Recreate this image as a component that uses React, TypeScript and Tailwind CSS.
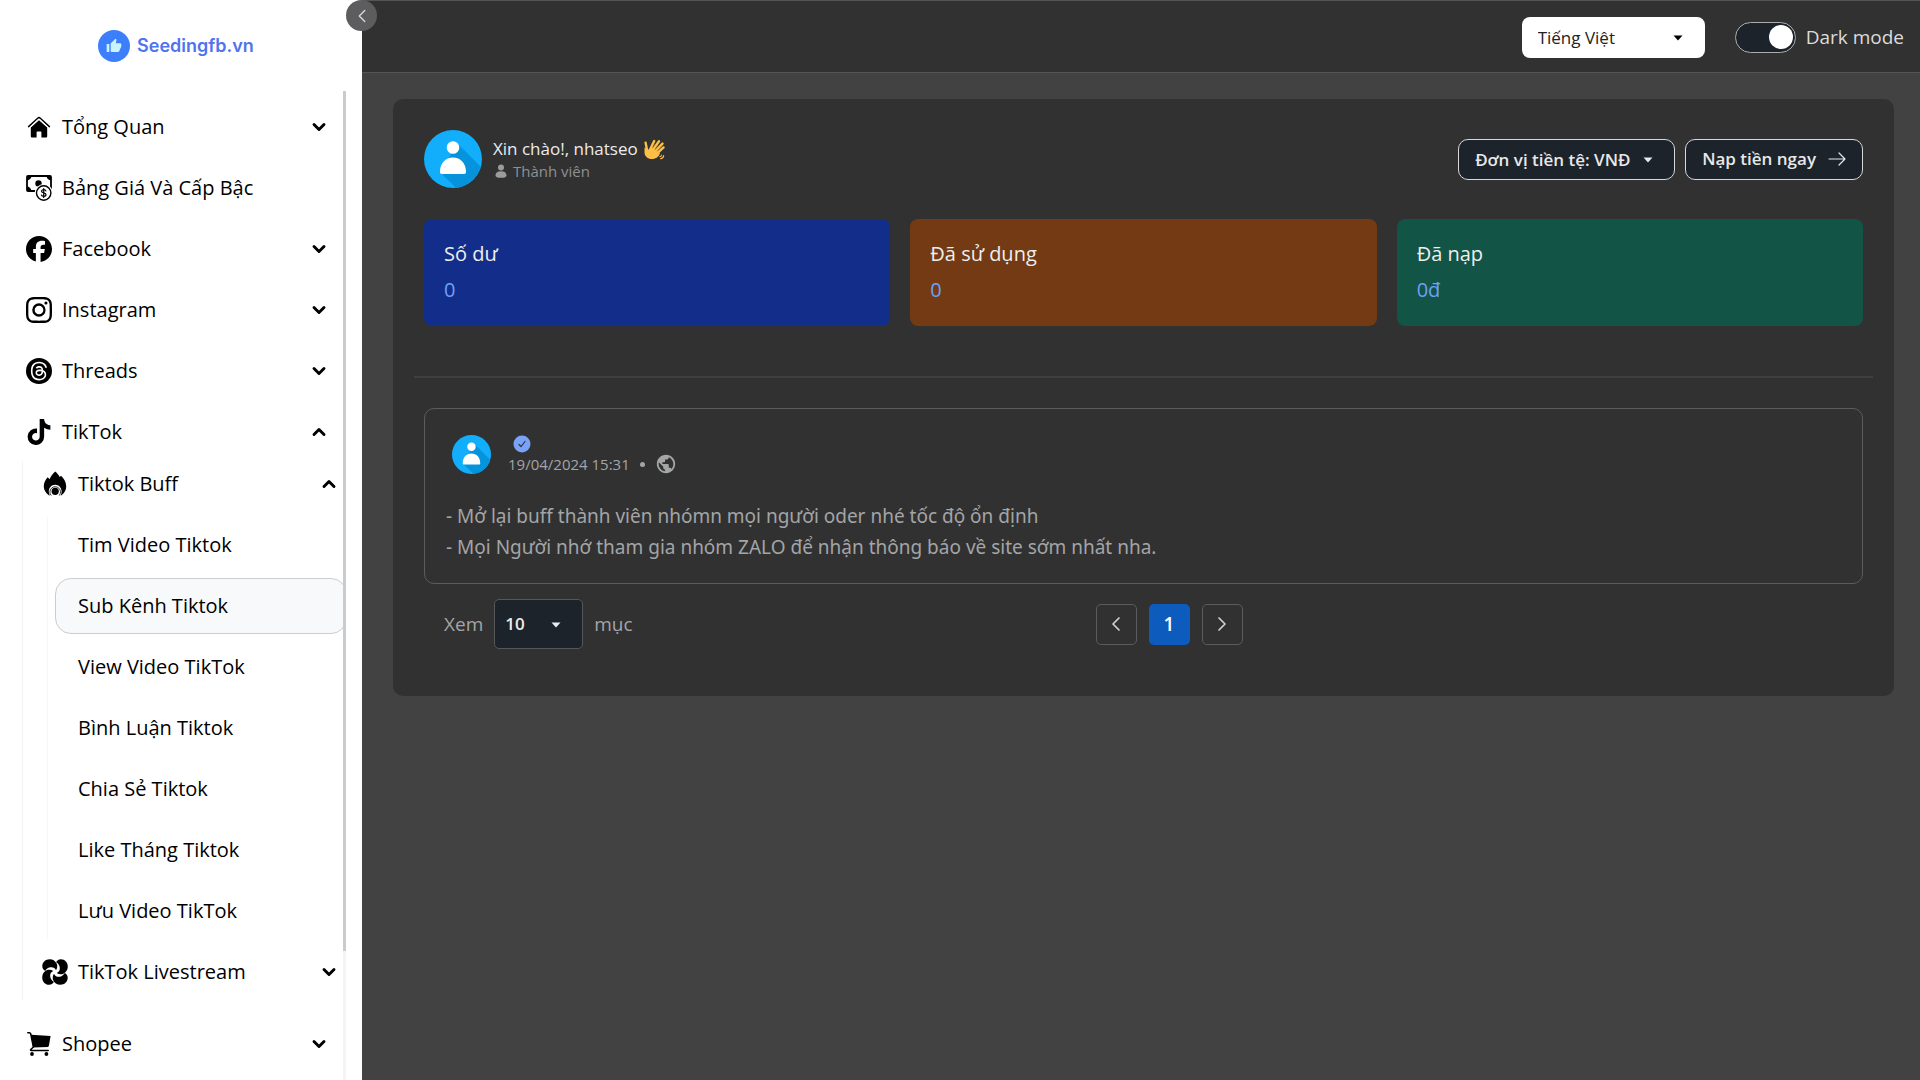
import type { ReactNode } from "react";
import { FaFacebook, FaTiktok, FaThreads } from "react-icons/fa6";
import { MdPublic, MdThumbUp } from "react-icons/md";
import { BsInstagram } from "react-icons/bs";
import { ChevronDown, ChevronLeft, ChevronRight, ChevronUp } from "lucide-react";

const HomeIcon = () => (
  <svg viewBox="0 0 26 26" className="size-[26px]" fill="currentColor" aria-hidden="true">
    <path d="M13 6.200 4.800 13.400v8.800c0 .9.500 1.400 1.400 1.400h4.400v-5.400c0-.5.300-.8.800-.8h3.200c.5 0 .8.300.8.800v5.400h4.400c.9 0 1.400-.5 1.400-1.400v-8.800z" />
    <path d="M2.600 12.600 11.700 4.200c.8-.7 1.800-.7 2.600 0l9.100 8.400" fill="none" stroke="currentColor" strokeWidth="1.500" strokeLinecap="round" />
    <path d="M3.800 13.400 13 5l9.200 8.400" fill="none" stroke="#fff" strokeWidth=".9" />
  </svg>
);

const MoneyIcon = () => (
  <svg viewBox="0 0 26 26" className="size-[26px]" fill="none" stroke="currentColor" aria-hidden="true">
    <rect x="1" y="1" width="24" height="15" rx="1" strokeWidth="1.800" />
    <path d="M1 1h4.400A4.400 4.400 0 0 1 1 5.400zM25 1h-4.400A4.400 4.400 0 0 0 25 5.400zM1 16h4.400A4.400 4.400 0 0 0 1 11.600z" fill="currentColor" stroke="none" />
    <circle cx="12.500" cy="8.400" r="3.200" fill="currentColor" stroke="none" />
    <circle cx="17.700" cy="18" r="9" fill="#fff" stroke="none" />
    <circle cx="17.700" cy="18" r="7.200" strokeWidth="1.400" />
    <path d="M19.900 15.900c-.3-.8-1.100-1.200-2.200-1.200-1.300 0-2.200.6-2.200 1.600 0 2.200 4.500 1.100 4.500 3.400 0 1-.9 1.600-2.300 1.600-1.200 0-2-.5-2.300-1.300M17.700 13.500v9" strokeWidth="1.200" strokeLinecap="round" />
  </svg>
);

const ThreadsIcon = () => (
  <span className="flex size-[26px] items-center justify-center rounded-full bg-black text-white">
    <FaThreads className="size-5" />
  </span>
);

const FireIcon = () => (
  <svg viewBox="0 0 26 26" className="size-[26px]" fill="currentColor" aria-hidden="true">
    <path d="M13.200.4c2 1.700 3.600 3.500 4.500 5.600l1.300-1.300c3 2.900 5.200 6.500 5.200 10.500 0 4.200-2.200 7.600-5.600 9.500.7-1.300 1-2.700 1-4.100 0-3.900-2.800-6.800-6.400-6.800s-6.400 2.900-6.400 6.800c0 1.400.3 2.800 1 4.100-3.400-1.900-6-5.300-6-9.500 0-3.700 1.800-6.600 3.900-8.900l2 2C8.400 5.400 10.800 2.600 13.200.4z" />
    <path d="M9.200 24.500a5.300 5.300 0 1 1 8 0" fill="none" stroke="currentColor" strokeWidth=".8" />
    <circle cx="13.200" cy="20.300" r="3.600" />
  </svg>
);

const PinwheelIcon = () => (
  <svg viewBox="0 0 26 26" className="size-[26px]" fill="currentColor" aria-hidden="true">
    {[0, 90, 180, 270].map((a) => (
      <path key={a} transform={`rotate(${a} 13 13)`} d="M.3 7.200C.3 3 3.600.2 7.600.2c3.400 0 6.200 2 7.300 4.900.7 2 .4 4.400-.9 6.200-.8-2.500-3.200-3.600-6-3C5.900 8.700 4.200 10 3.300 11.900 1.400 11 .3 9.200.3 7.200z" />
    ))}
  </svg>
);

const CartIcon = () => (
  <svg viewBox="0 0 26 26" className="size-[26px]" fill="currentColor" aria-hidden="true">
    <path d="M5 3.800 24.600 5l-1.700 9.700c-.1.700-.6 1.100-1.300 1.200L7 16.600z" />
    <path d="M1.800 1.800h1.600c.7 0 1.100.3 1.300 1L7.400 16l-2.600 2.400c-.5.600-.2 1 .4 1h17" fill="none" stroke="currentColor" strokeWidth="1.500" strokeLinecap="round" />
    <circle cx="6" cy="23" r="1.900" />
    <circle cx="20.400" cy="23" r="1.900" />
  </svg>
);

const Avatar = ({ className }: { className: string }) => (
  <svg viewBox="0 0 58 58" className={className} role="img" aria-label="nhatseo">
    <defs>
      <clipPath id="disc"><circle cx="29" cy="29" r="29" /></clipPath>
    </defs>
    <g clipPath="url(#disc)">
      <rect width="58" height="58" fill="#12aefc" />
      <path d="M33 13 66 46v20H40L17 43z" fill="#0594dc" />
    </g>
    <circle cx="29" cy="17.500" r="6.300" fill="#fff" />
    <path d="M16 42c0-9 5.500-14.500 13-14.500S42 33 42 42c0 1.200-.6 2-1.800 2H17.800c-1.200 0-1.800-.8-1.800-2z" fill="#fff" />
  </svg>
);

const WaveIcon = () => (
  <svg viewBox="0 0 22 22" className="size-[22px]" role="img" aria-label="👋">
    <g fill="none" stroke="#fdbf45" strokeWidth="2.400" strokeLinecap="round">
      <path d="M2.600 4.600 4 12M7.800 10l3.400-7M10.500 11l5.500-7.800M12.500 13l7-7.400M14.500 15l6-5.600" />
    </g>
    <path d="M1.500 9.500c1.500.7 2.500 1.600 3.500 2.500L8 8.500l9 6.500c-1 3.800-4 6-8 6-4.500 0-7.500-3-7.500-6.800z" fill="#fdbf45" />
    <path d="m9.300 9.800 2-3.600M11.800 11.300l3-4M14 13.200l3.300-3.400" stroke="#c98217" strokeWidth=".6" fill="none" />
    <path d="M17.500 20.800c1.800-.3 2.900-1.400 3.200-3.200M16.800 18.700c1-.2 1.600-.8 1.800-1.700" stroke="#fdbf45" strokeWidth="1.100" fill="none" strokeLinecap="round" />
  </svg>
);

const PersonIcon = () => (
  <svg viewBox="0 0 12 14" className="h-3.5 w-3" fill="#9c9c9e" aria-hidden="true">
    <circle cx="6" cy="3.500" r="3" />
    <path d="M.5 11.500C.5 8.800 2.500 7.300 6 7.300s5.500 1.500 5.500 4.200c0 1.500-2 2.300-5.500 2.300S.5 13 .5 11.500z" />
  </svg>
);

const Caret = ({ className }: { className: string }) => (
  <svg viewBox="0 0 10 6" className={`h-1.5 w-2.5 ${className}`} fill="currentColor" aria-hidden="true">
    <path d="M.5.500h9L5 5.500z" />
  </svg>
);

const ArrowRight = () => (
  <svg viewBox="0 0 18 14" className="h-3.5 w-[18px]" fill="none" stroke="currentColor" strokeWidth="1.200" strokeLinecap="round" strokeLinejoin="round" aria-hidden="true">
    <path d="M1 7h16M11 1l6 6-6 6" />
  </svg>
);

function Row({ icon, label, open, expandable = true }: { icon: ReactNode; label: string; open?: boolean; expandable?: boolean }) {
  const Chevron = open ? ChevronUp : ChevronDown;
  return (
    <button type="button" aria-expanded={expandable ? !!open : undefined} className="flex h-14 w-full shrink-0 items-center gap-2.5 pr-3.5 pl-[26px] text-left">
      {icon}
      <span className="flex-1">{label}</span>
      {expandable && <Chevron className="size-5" strokeWidth={3.5} />}
    </button>
  );
}

function SubRow({ icon, label, open, className }: { icon: ReactNode; label: string; open?: boolean; className: string }) {
  const Chevron = open ? ChevronUp : ChevronDown;
  return (
    <button type="button" aria-expanded={!!open} className={`flex w-full shrink-0 items-center gap-2.5 pr-1 pl-[19px] text-left ${className}`}>
      {icon}
      <span className="flex-1">{label}</span>
      <Chevron className="size-5" strokeWidth={3.5} />
    </button>
  );
}

const services = [
  "Tim Video Tiktok",
  "Sub Kênh Tiktok",
  "View Video TikTok",
  "Bình Luận Tiktok",
  "Chia Sẻ Tiktok",
  "Like Tháng Tiktok",
  "Lưu Video TikTok",
];

function Sidebar() {
  return (
    <aside className="relative flex h-screen w-[362px] shrink-0 flex-col bg-white text-black">
      <a href="#" className="flex h-[91px] shrink-0 items-center justify-center gap-[7px] pr-2.5">
        <span className="flex size-8 items-center justify-center rounded-full bg-[#3d7ffa] text-[#c9f3ff]">
          <MdThumbUp className="size-4" />
        </span>
        <span className="font-['Inter',sans-serif] text-lg font-semibold text-[#4f74ee]">Seedingfb.vn</span>
      </a>
      <div className="flex min-h-0 flex-1 pr-4">
        <nav className="flex flex-1 flex-col overflow-hidden pt-2 text-xl">
          <div className="flex flex-col gap-[5px]">
            <Row icon={<HomeIcon />} label="Tổng Quan" />
            <Row icon={<MoneyIcon />} label="Bảng Giá Và Cấp Bậc" expandable={false} />
            <Row icon={<FaFacebook className="size-[26px]" />} label="Facebook" />
            <Row icon={<BsInstagram className="size-[26px]" />} label="Instagram" />
            <Row icon={<ThreadsIcon />} label="Threads" />
            <Row icon={<FaTiktok className="size-[26px]" />} label="TikTok" open />
          </div>
          <div className="mt-px ml-[22px] flex flex-col border-l border-[#f3f3f3]">
            <SubRow icon={<FireIcon />} label="Tiktok Buff" open className="h-[46px]" />
            <ul className="mt-2.5 ml-6 flex flex-col gap-[5px] border-l border-[#f7f7f7]">
              {services.map((s) => (
                <li key={s}>
                  <a
                    href="#"
                    className={
                      s === "Sub Kênh Tiktok"
                        ? "-mr-1 ml-[7px] flex h-14 items-center rounded-2xl border border-[#cbcdcf] bg-[#f8f9fb] pl-[22px]"
                        : "-mr-1 ml-[7px] flex h-14 items-center rounded-2xl border border-transparent pl-[22px]"
                    }
                  >
                    {s}
                  </a>
                </li>
              ))}
            </ul>
            <SubRow icon={<PinwheelIcon />} label="TikTok Livestream" className="mt-[5px] h-14" />
          </div>
          <div className="mt-4">
            <Row icon={<CartIcon />} label="Shopee" />
          </div>
        </nav>
        <div className="w-[3px] bg-[#f3f4f4]">
          <div className="h-[87%] bg-[#c9cccc]" />
        </div>
      </div>
      <button
        type="button"
        aria-label="Thu gọn menu"
        className="absolute top-0 -right-[15px] z-10 flex size-[31px] items-center justify-center rounded-full bg-[#5d5d5f] text-[#d8d8d8]"
      >
        <ChevronLeft className="size-[22px]" strokeWidth={1.5} />
      </button>
    </aside>
  );
}

function TopBar() {
  return (
    <header className="flex h-[73px] items-center justify-end gap-[30px] border-y border-[#555555] bg-[#313131] pt-px pr-4">
      <div className="relative">
        <select
          aria-label="Ngôn ngữ"
          className="h-[41px] w-[183px] appearance-none rounded-lg bg-white pt-0.5 pl-4 text-[17px] text-[#222222]"
        >
          <option>Tiếng Việt</option>
        </select>
        <Caret className="pointer-events-none absolute top-[18px] right-[22px] text-black" />
      </div>
      <label className="flex items-center gap-2.5 text-[19px] text-[#dcdcdc]">
        <input
          type="checkbox"
          role="switch"
          defaultChecked
          className="flex h-[31px] w-[61px] appearance-none items-center rounded-full border border-[#adadad] bg-[#1c232b] px-0.5 before:size-6 before:rounded-full before:bg-white checked:justify-end"
        />
        Dark mode
      </label>
    </header>
  );
}

const Stat = ({ title, value, className }: { title: string; value: string; className: string }) => (
  <div className={`h-[107px] rounded-lg px-5 pt-[21px] ${className}`}>
    <h2 className="text-xl leading-7 font-medium text-[#eeeeee]">{title}</h2>
    <p className="mt-2 text-xl leading-7 font-medium text-[#6ea0f8]">{value}</p>
  </div>
);

export default function App() {
  return (
    <div className="flex min-h-screen bg-[#424242] font-['Open_Sans','Noto_Sans',sans-serif]">
      <Sidebar />
      <div className="min-w-0 flex-1">
        <TopBar />
        <main className="mt-[26px] mr-[26px] ml-[31px] rounded-[10px] bg-[#313131] px-[31px] pt-[31px] pb-[47px]">
          <section className="flex items-center gap-[11px]">
            <Avatar className="size-[58px]" />
            <div className="flex-1">
              <h1 className="flex items-center gap-[5px] text-[17px] leading-6 font-medium text-[#ececec]">
                Xin chào!, nhatseo <WaveIcon />
              </h1>
              <p className="flex items-center gap-1.5 pl-0.5 text-[15px] leading-5 text-[#8d9094]">
                <PersonIcon />
                Thành viên
              </p>
            </div>
            <div className="flex gap-2.5">
              <div className="relative">
                <select
                  aria-label="Đơn vị tiền tệ"
                  className="h-[41px] w-[217px] appearance-none rounded-[10px] border border-[#d6d8da] bg-[#1c232b] pt-0.5 pl-4 text-[17px] font-semibold text-[#e8e8e8]"
                >
                  <option>Đơn vị tiền tệ: VNĐ</option>
                </select>
                <Caret className="pointer-events-none absolute top-[18px] right-[22px] text-[#e8e8e8]" />
              </div>
              <button
                type="button"
                className="flex h-[41px] items-center gap-3 rounded-[10px] border border-[#d6d8da] bg-[#1c232b] px-4 text-[17px] font-semibold text-[#e8e8e8]"
              >
                Nạp tiền ngay <ArrowRight />
              </button>
            </div>
          </section>

          <section className="mt-[31px] grid grid-cols-3 gap-5">
            <Stat title="Số dư" value="0" className="bg-[#122e8a]" />
            <Stat title="Đã sử dụng" value="0" className="bg-[#733a13]" />
            <Stat title="Đã nạp" value="0đ" className="bg-[#125445]" />
          </section>

          <hr className="-mx-2.5 mt-[50px] border-t-2 border-[#3f3f3f]" />

          <article className="mt-[30px] rounded-[10px] border border-[#5c5c5c] pb-5 text-[#a3a5a7]">
            <header className="flex items-start gap-[17px] pt-[26px] pl-[27px]">
              <Avatar className="size-[39px]" />
              <div>
                <svg viewBox="0 0 18 18" className="ml-[5px] size-[18px]" role="img" aria-label="Đã xác minh">
                  <circle cx="9" cy="9" r="8.500" fill="#7aa3f7" />
                  <path d="m6 9.500 2 2 4-5" fill="none" stroke="#2b3550" strokeWidth="1.200" strokeLinecap="round" />
                </svg>
                <div className="flex items-center gap-2.5 text-[15px] leading-5">
                  <time>19/04/2024 15:31</time>
                  <span className="size-[5px] rounded-full bg-[#a3a5a7]" />
                  <MdPublic className="size-[22px]" />
                </div>
              </div>
            </header>
            <p className="mt-[26px] pl-[21px] font-['Noto_Sans',sans-serif] text-[19px] leading-[31px]">
              - Mở lại buff thành viên nhómn mọi người oder nhé tốc độ ổn định
              <br />- Mọi Người nhớ tham gia nhóm ZALO để nhận thông báo về site sớm nhất nha.
            </p>
          </article>

          <footer className="mt-[15px] grid grid-cols-[7fr_8fr] items-center text-[19px] text-[#a3a5a7]">
            <label className="flex items-center gap-[11px] pl-5">
              Xem
              <span className="relative">
                <select className="h-[50px] w-[89px] appearance-none rounded-[5px] border border-[#55585b] bg-[#1c232b] pl-2.5 text-[17px] font-semibold text-[#ececec]">
                  <option>10</option>
                </select>
                <Caret className="pointer-events-none absolute top-[23px] right-[22px] text-[#ececec]" />
              </span>
              mục
            </label>
            <div className="flex gap-3">
              <button type="button" aria-label="Trang trước" className="flex size-[41px] items-center justify-center rounded-[5px] border border-[#5c5c5c] text-[#d0d0d0]">
                <ChevronLeft className="size-6" strokeWidth={1.7} />
              </button>
              <button type="button" aria-current="page" className="flex size-[41px] items-center justify-center rounded-[5px] bg-[#0d5bbd] font-semibold text-white">
                1
              </button>
              <button type="button" aria-label="Trang sau" className="flex size-[41px] items-center justify-center rounded-[5px] border border-[#5c5c5c] text-[#d0d0d0]">
                <ChevronRight className="size-6" strokeWidth={1.7} />
              </button>
            </div>
          </footer>
        </main>
      </div>
    </div>
  );
}
